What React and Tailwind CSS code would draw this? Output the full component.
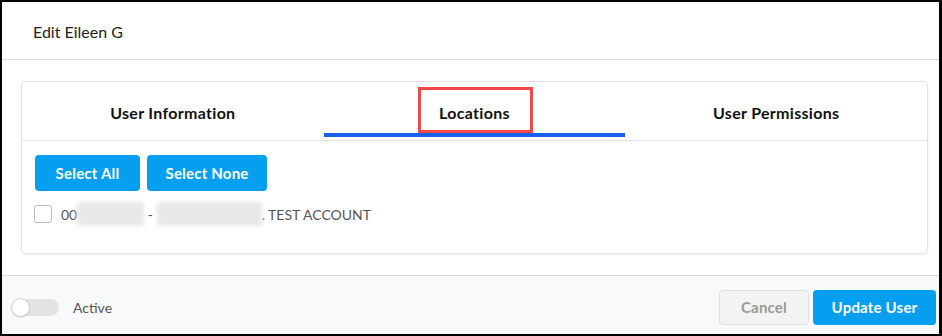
import React from 'react';

function Tab({ label, active }) {
  return (
    <div className="flex flex-col items-center h-[58px]">
      <div className="pt-[21px] h-[51px] text-[16px] font-bold text-[#111] leading-[20px] tracking-[0.3px]">{label}</div>
      <div className={active ? "w-full h-[4px] bg-[#1760e8]" : "w-full h-[4px]"} />
    </div>
  );
}

function Blur({ w }) {
  return <span className={`inline-block h-[24px] bg-[#e8e8e8] blur-[2px] align-middle ${w}`} />;
}

export default function App() {
  return (
    <div className="relative w-[942px] h-[336px] bg-white border-black border-l-2 border-t-2 border-b-2 border-r-[3px] flex flex-col font-['Lato',sans-serif]">
      {/* header */}
      <header className="h-[58px] border-b border-[#dedede] flex items-center pl-[31px] pt-[3px]">
        <h1 className="text-[16px] text-[#222]">Edit Eileen G</h1>
      </header>

      {/* body */}
      <div className="h-[215px] pt-[21px] pl-[19px] pr-[11px]">
        <div className="h-[173px] border border-[#e2e2e2] rounded-[5px] shadow-[0_1px_2px_rgba(0,0,0,0.08)]">
          <div className="grid grid-cols-3 border-b border-[#e2e2e2]">
            <Tab label="User Information" />
            <Tab label="Locations" active />
            <Tab label="User Permissions" />
          </div>

          <div className="pl-[13px] pt-[14px]">
            <div className="flex gap-[7px]">
              <button className="w-[105px] h-[36px] rounded-[4px] bg-[#049ff1] text-white text-[15px] font-bold tracking-[0.2px]">Select All</button>
              <button className="w-[120px] h-[36px] rounded-[4px] bg-[#049ff1] text-white text-[15px] font-bold tracking-[0.2px]">Select None</button>
            </div>
            <div className="flex items-center mt-[15px] h-[18px] -translate-y-px">
              <span className="w-[18px] h-[18px] rounded-[3px] border border-[#bdbdbd] bg-white -ml-px" />
              <span className="ml-[9px] text-[14px] text-[#555] flex items-center whitespace-pre">
                00<Blur w="w-[67px]" /> - <Blur w="w-[105px]" />. TEST ACCOUNT
              </span>
            </div>
          </div>
        </div>
      </div>

      {/* footer */}
      <footer className="flex-1 bg-[#f8f9fa] border-t border-[#dcdcdc] flex items-center justify-between pl-[10px] pr-[3px] pt-[5px]">
        <div className="flex items-center">
          <div className="relative w-[47px] h-[17px] rounded-full bg-[#e3e3e3]">
            <span className="absolute -left-px -top-px w-[19px] h-[19px] rounded-full bg-white border border-[#cfcfcf] shadow-[0_1px_1px_rgba(0,0,0,0.1)]" />
          </div>
          <span className="ml-[14px] text-[14px] text-[#555]">Active</span>
        </div>
        <div className="flex gap-[4px]">
          <button className="w-[90px] h-[35px] rounded-[4px] bg-[#f3f3f3] border border-[#dddddd] text-[#999] text-[15px] font-bold tracking-[0.2px]">Cancel</button>
          <button className="w-[123px] h-[35px] rounded-[4px] bg-[#049ff1] text-white text-[15px] font-bold tracking-[0.2px]">Update User</button>
        </div>
      </footer>

      {/* annotation box */}
      <div className="absolute left-[416px] top-[85px] w-[115px] h-[46px] border-[3px] border-[#f24848]" />
    </div>
  );
}
